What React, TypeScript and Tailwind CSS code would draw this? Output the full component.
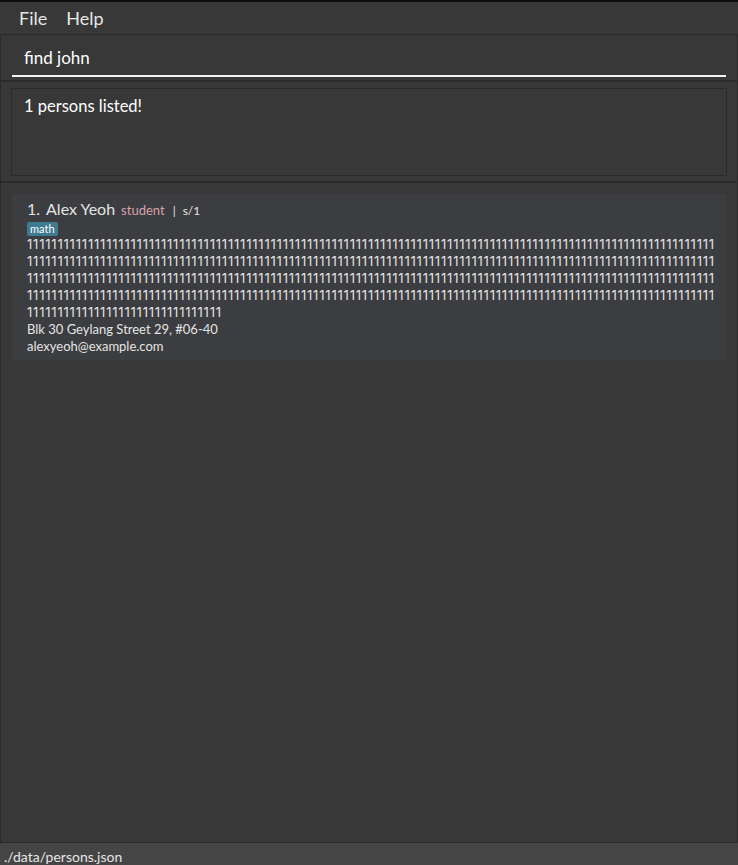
import React from 'react';

const ONES_LINES = ['1'.repeat(113), '1'.repeat(113), '1'.repeat(113), '1'.repeat(113), '1'.repeat(32)];

const font = { fontFamily: 'Lato, "Open Sans", sans-serif' };
const digitFont = { fontFamily: 'Inter, Lato, sans-serif' };

const MenuBar = () => (
  <div className="flex h-[33px] items-center gap-[19px] border-b border-[#2b2b2b] pl-[19px] text-[18px] text-[#e6e6e6]">
    <span>File</span>
    <span>Help</span>
  </div>
);

const CommandBox = () => (
  <div className="h-[47px] border-x border-b-2 border-[#2b2b2b] px-[11px] pt-[12px]">
    <div className="h-[30px] border-b-2 border-[#f2f2f2] pl-[12px] text-[17px] leading-[22px] text-white">
      find john
    </div>
  </div>
);

const ResultDisplay = () => (
  <div className="h-[101px] border-x border-b-2 border-[#2b2b2b] px-[10px] pt-[6px]">
    <div className="h-[88px] border border-[#2b2b2b] pl-[12px] pt-[5px] text-[16.5px] leading-[24px] text-white">
      1 persons listed!
    </div>
  </div>
);

const PersonCard = () => (
  <div className="bg-[#3c3d40] pb-[5px] pl-[15px] pr-[7px] pt-[6px] text-[#e4e4e4]">
    <div className="flex items-baseline leading-[18px]">
      <span className="text-[16px]">1.</span>
      <span className="ml-[6px] text-[16px]">Alex Yeoh</span>
      <span className="ml-[6px] text-[13px] text-[#d7a1ab]">student</span>
      <span className="ml-[8px] text-[12px]">|</span>
      <span className="ml-[7px] text-[12px]">s/1</span>
    </div>
    <div className="mt-[2px] flex">
      <span className="rounded-[2px] bg-[#3e7b91] px-[3px] text-[11px] leading-[14px] text-white">math</span>
    </div>
    <div className="text-[13px] leading-[17px] tracking-[0.8px]" style={digitFont}>
      {ONES_LINES.map((line, i) => (
        <div key={i} className="whitespace-nowrap">
          {line}
        </div>
      ))}
    </div>
    <div className="text-[13px] leading-[17px]">Blk 30 Geylang Street 29, #06-40</div>
    <div className="text-[13px] leading-[17px]">alexyeoh@example.com</div>
  </div>
);

const PersonList = () => (
  <div className="flex-1 border-x border-b border-[#2b2b2b] px-[11px] pt-[11px]">
    <PersonCard />
  </div>
);

const StatusBar = () => (
  <div className="h-[22px] bg-[#454545] pl-[4px] text-[14px] leading-[28px] text-[#e6e6e6]">./data/persons.json</div>
);

export default function App() {
  return (
    <div className="flex h-[865px] w-[738px] flex-col overflow-hidden border-t-2 border-[#0d0d0d] bg-[#383838]" style={font}>
      <MenuBar />
      <CommandBox />
      <ResultDisplay />
      <PersonList />
      <StatusBar />
    </div>
  );
}
